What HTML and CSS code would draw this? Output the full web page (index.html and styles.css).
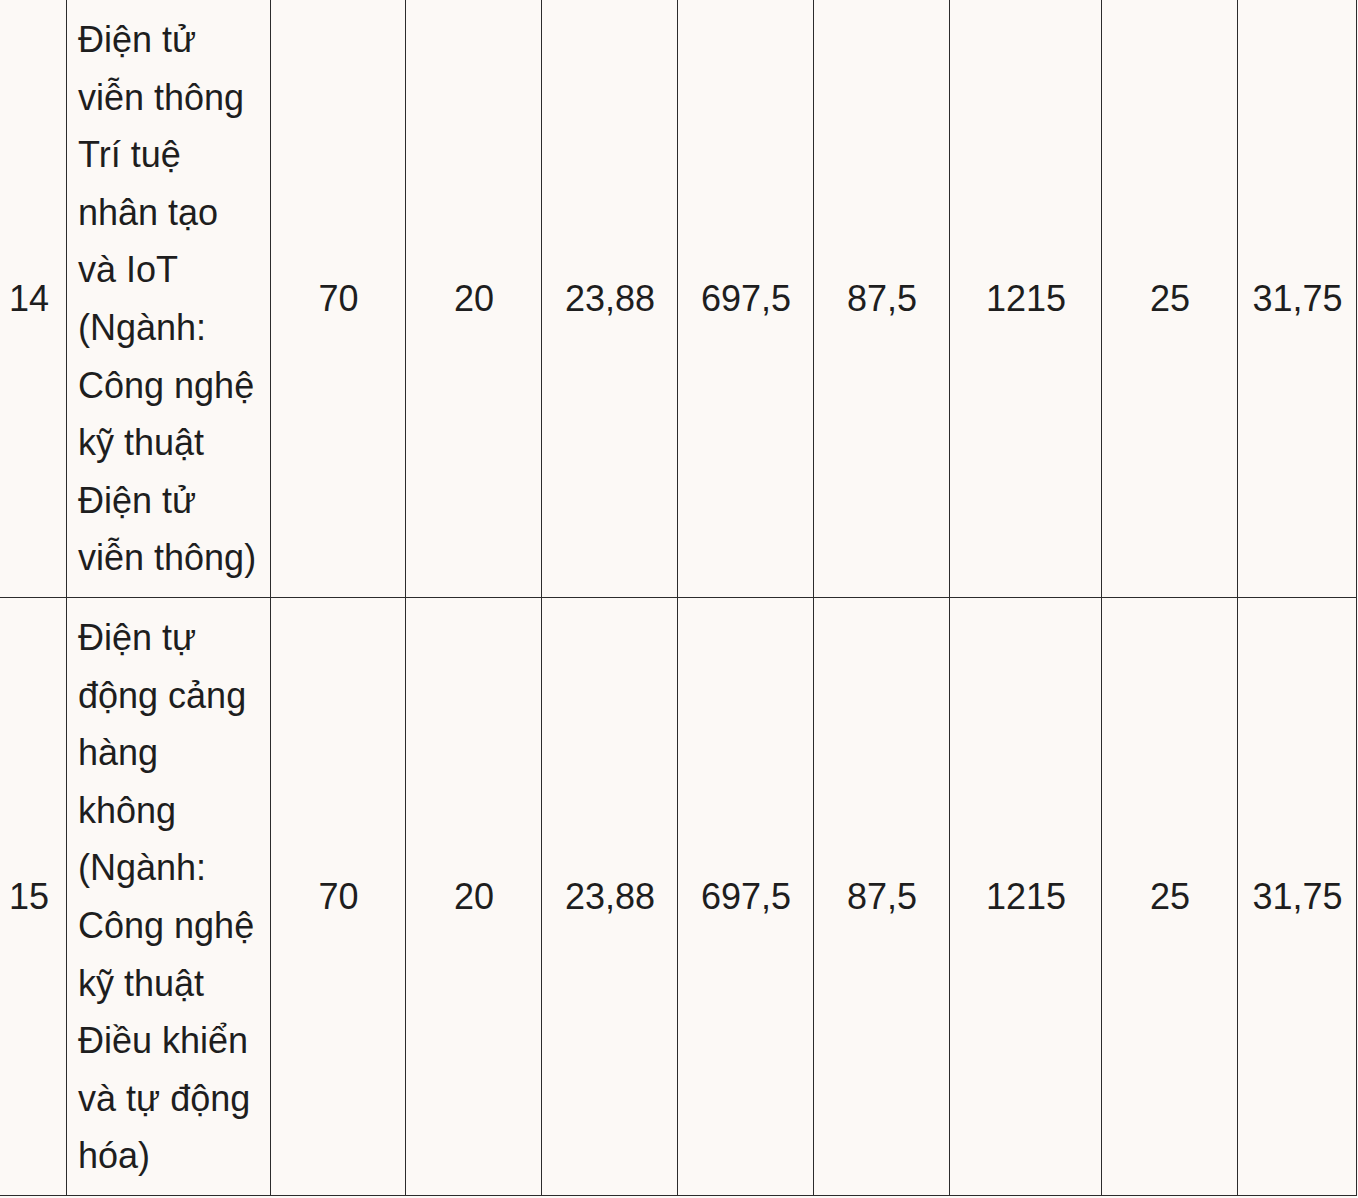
FILE: index.html
```html
<!DOCTYPE html>
<html lang="vi">
<head>
<meta charset="utf-8">
<title>Bảng điểm</title>
<link rel="stylesheet" href="styles.css">
</head>
<body>
<table class="score-table">
  <colgroup>
    <col class="c-no">
    <col class="c-name">
    <col class="c-first">
    <col class="c-n">
    <col class="c-n">
    <col class="c-n">
    <col class="c-n">
    <col class="c-wide">
    <col class="c-n">
    <col class="c-last">
  </colgroup>
  <tbody>
    <tr>
      <td class="no">14</td>
      <td class="name">Điện tử viễn thông Trí tuệ nhân tạo và IoT (Ngành: Công nghệ kỹ thuật Điện tử viễn thông)</td>
      <td>70</td>
      <td>20</td>
      <td>23,88</td>
      <td>697,5</td>
      <td>87,5</td>
      <td>1215</td>
      <td>25</td>
      <td>31,75</td>
    </tr>
    <tr>
      <td class="no">15</td>
      <td class="name">Điện tự động cảng hàng không (Ngành: Công nghệ kỹ thuật Điều khiển và tự động hóa)</td>
      <td>70</td>
      <td>20</td>
      <td>23,88</td>
      <td>697,5</td>
      <td>87,5</td>
      <td>1215</td>
      <td>25</td>
      <td>31,75</td>
    </tr>
  </tbody>
</table>
</body>
</html>
```
FILE: styles.css
```css
html, body {
  margin: 0;
  padding: 0;
  background: #fcf9f6;
}

body {
  font-family: "Liberation Sans", Arial, sans-serif;
  color: #1e1e1e;
  overflow: hidden;
}

.score-table {
  border-collapse: collapse;
  table-layout: fixed;
  width: 1357px;
  margin: -1px 0 0 -1px;
  font-size: 36px;
  line-height: 1.6;
}

.c-no { width: 67px; }
.c-name { width: 204px; }
.c-first { width: 135px; }
.c-n { width: 136px; }
.c-wide { width: 152px; }
.c-last { width: 119px; }

.score-table td {
  border: 1px solid #2c2c2c;
  padding: 11px 10px 10px 11px;
  text-align: center;
  vertical-align: middle;
}

.score-table td.no {
  text-align: left;
  padding-left: 9px;
  padding-right: 4px;
}

.score-table td.name {
  text-align: left;
  padding-left: 11px;
  padding-right: 10px;
}
```
